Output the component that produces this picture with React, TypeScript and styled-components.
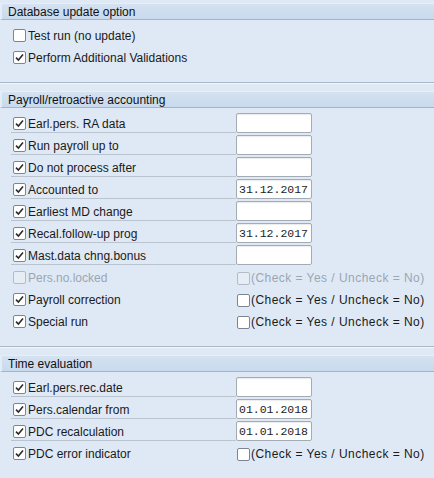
import React from "react";
import styled, { createGlobalStyle } from "styled-components";

const Global = createGlobalStyle`
  html, body { margin: 0; padding: 0; background: #dfe9f5; }
  body { font-family: "Liberation Sans", Arial, sans-serif; font-size: 12px; color: #1a1a1a; }
`;

const Page = styled.div`
  width: 434px;
  min-height: 478px;
  padding-top: 3px;
  display: flex;
  flex-direction: column;
  gap: 8px;
  background: #dfe9f5;
`;

const Section = styled.section`
  display: flex;
  flex-direction: column;
  border-bottom: 1px solid #a9b7c6;
  box-shadow: 0 1px 0 #f2f6fb;
`;

const Header = styled.div`
  display: flex;
  align-items: center;
  padding-left: 6px;
  background: linear-gradient(#d4e2f1, #c8daed);
  border-top: 1px solid #e6eef7;
  border-bottom: 1px solid #9db5cf;
  border-left: 2px solid #e4edf7;
  box-sizing: border-box;
  height: 17px;
  font-size: 12px;
  color: #111;
`;

const Body = styled.div`
  display: flex;
  flex-direction: column;
  padding: 4px 0 14px 11px;
`;

const Row = styled.div`
  display: flex;
  align-items: flex-start;
  height: 22px;
`;

const LabelCell = styled.div<{ $lined?: boolean }>`
  width: 225px;
  height: 21px;
  box-sizing: border-box;
  display: flex;
  align-items: center;
  gap: 2px;
  padding: 3px 0 0 2px;
  border-bottom: 1px solid ${(p) => (p.$lined ? "#b9c4cf" : "transparent")};
`;

const Label = styled.span<{ $disabled?: boolean; $wide?: boolean }>`
  color: ${(p) => (p.$disabled ? "#9aa6b2" : "#1a1a1a")};
  white-space: nowrap;
  letter-spacing: ${(p) => (p.$wide ? "0.46px" : "0")};
`;

const Box = styled.span<{ $disabled?: boolean }>`
  width: 13px;
  height: 13px;
  box-sizing: border-box;
  flex: none;
  border: 1px solid ${(p) => (p.$disabled ? "#b3bcc6" : "#7d8590")};
  border-radius: 2px;
  background: ${(p) => (p.$disabled ? "#e6edf5" : "#ffffff")};
  display: flex;
  align-items: center;
  justify-content: center;
`;

const Input = styled.div`
  width: 76px;
  height: 20px;
  margin-top: 1px;
  box-sizing: border-box;
  border: 1px solid #a4abb3;
  border-radius: 2px;
  background: #ffffff;
  box-shadow: inset 0 1px 1px rgba(0, 0, 0, 0.08);
  display: flex;
  align-items: center;
  padding-left: 2px;
  font-family: "Liberation Mono", "Courier New", monospace;
  font-size: 11.5px;
  color: #222;
`;

const Flag = styled.div`
  display: flex;
  align-items: center;
  gap: 1px;
  height: 21px;
  padding: 3px 0 0 1px;
  box-sizing: border-box;
`;

const Check = ({ checked, disabled }: { checked?: boolean; disabled?: boolean }) => (
  <Box $disabled={disabled}>
    {checked && (
      <svg width="11" height="11" viewBox="0 0 11 11">
        <path d="M2 5.6 L4.4 8 L9 2.6" fill="none" stroke="#2b2b2b" strokeWidth="1.6" />
      </svg>
    )}
  </Box>
);

type RowDef = {
  label: string;
  checked?: boolean;
  disabled?: boolean;
  value?: string;
  input?: boolean;
  flag?: boolean;
};

const FieldRow = ({ r }: { r: RowDef }) => (
  <Row>
    <LabelCell $lined={r.input}>
      <Check checked={r.checked} disabled={r.disabled} />
      <Label $disabled={r.disabled}>{r.label}</Label>
    </LabelCell>
    {r.input && <Input>{r.value}</Input>}
    {r.flag && (
      <Flag>
        <Check disabled={r.disabled} />
        <Label $disabled={r.disabled} $wide>
          (Check = Yes / Uncheck = No)
        </Label>
      </Flag>
    )}
  </Row>
);

const sections: { title: string; rows: RowDef[] }[] = [
  {
    title: "Database update option",
    rows: [
      { label: "Test run (no update)" },
      { label: "Perform Additional Validations", checked: true },
    ],
  },
  {
    title: "Payroll/retroactive accounting",
    rows: [
      { label: "Earl.pers. RA data", checked: true, input: true },
      { label: "Run payroll up to", checked: true, input: true },
      { label: "Do not process after", checked: true, input: true },
      { label: "Accounted to", checked: true, input: true, value: "31.12.2017" },
      { label: "Earliest MD change", checked: true, input: true },
      { label: "Recal.follow-up prog", checked: true, input: true, value: "31.12.2017" },
      { label: "Mast.data chng.bonus", checked: true, input: true },
      { label: "Pers.no.locked", disabled: true, flag: true },
      { label: "Payroll correction", checked: true, flag: true },
      { label: "Special run", checked: true, flag: true },
    ],
  },
  {
    title: "Time evaluation",
    rows: [
      { label: "Earl.pers.rec.date", checked: true, input: true },
      { label: "Pers.calendar from", checked: true, input: true, value: "01.01.2018" },
      { label: "PDC recalculation", checked: true, input: true, value: "01.01.2018" },
      { label: "PDC error indicator", checked: true, flag: true },
    ],
  },
];

export default function App() {
  return (
    <>
      <Global />
      <Page>
        {sections.map((s) => (
          <Section key={s.title}>
            <Header>{s.title}</Header>
            <Body>
              {s.rows.map((r) => (
                <FieldRow key={r.label} r={r} />
              ))}
            </Body>
          </Section>
        ))}
      </Page>
    </>
  );
}
